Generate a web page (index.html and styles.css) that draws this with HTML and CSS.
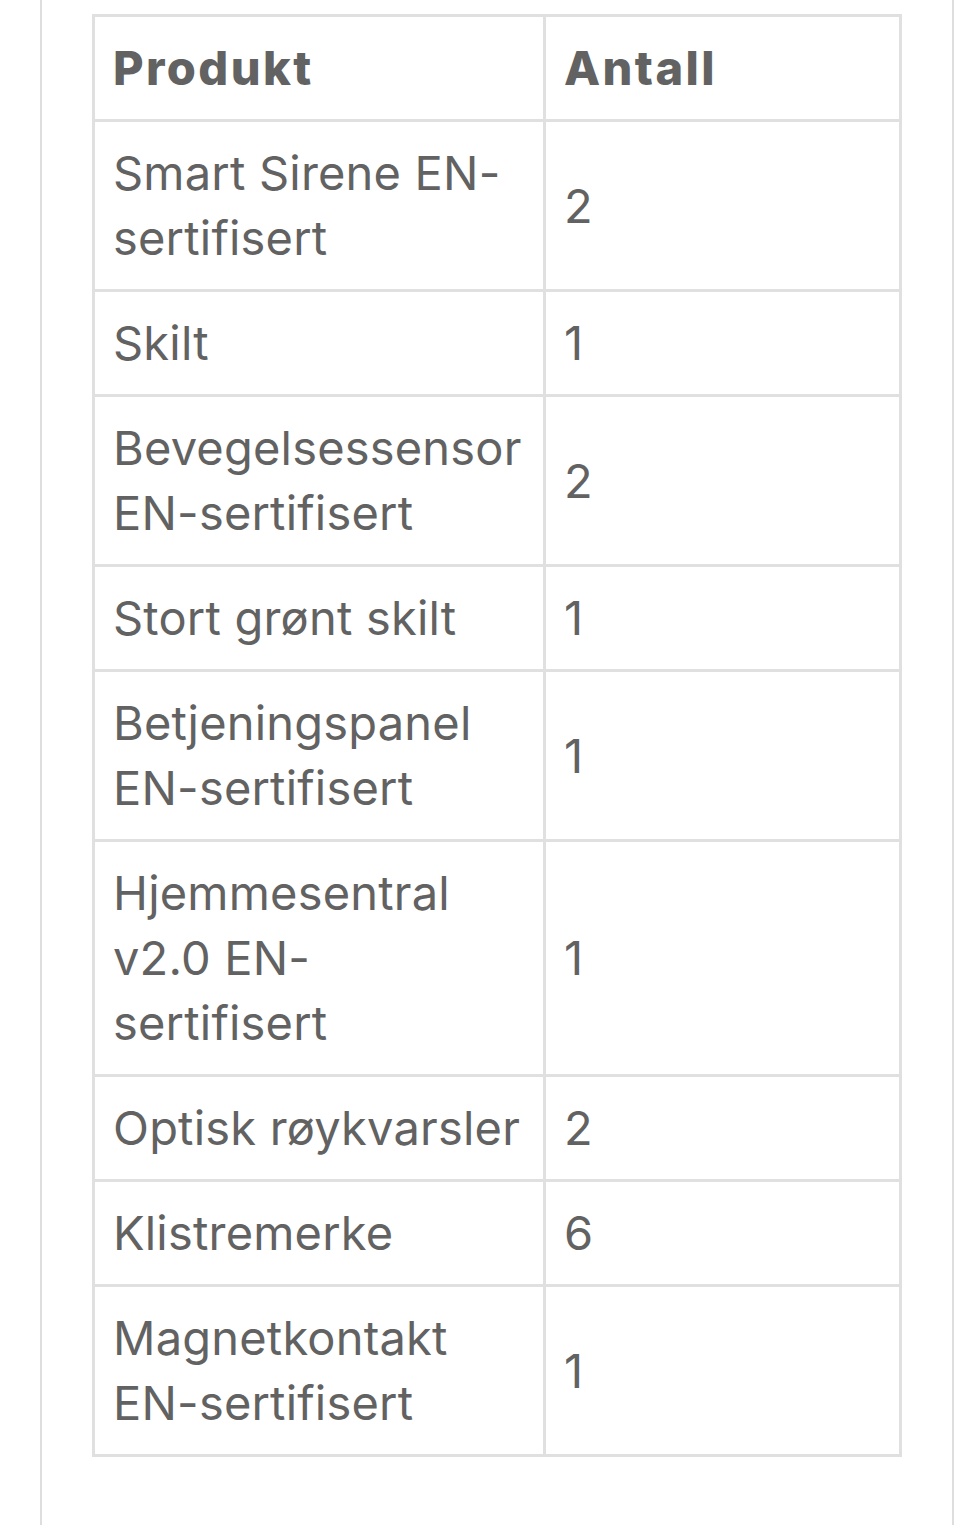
FILE: index.html
```html
<!DOCTYPE html>
<html lang="no">
<head>
<meta charset="utf-8">
<title>Produkter</title>
<link rel="stylesheet" href="styles.css">
</head>
<body>
<div class="page">
  <table class="products">
    <thead>
      <tr><th class="col-name">Produkt</th><th class="col-qty">Antall</th></tr>
    </thead>
    <tbody>
      <tr><td>Smart Sirene EN-<br>sertifisert</td><td>2</td></tr>
      <tr><td>Skilt</td><td>1</td></tr>
      <tr><td>Bevegelsessensor<br>EN-sertifisert</td><td>2</td></tr>
      <tr><td>Stort grønt skilt</td><td>1</td></tr>
      <tr><td>Betjeningspanel<br>EN-sertifisert</td><td>1</td></tr>
      <tr><td>Hjemmesentral<br>v2.0 EN-<br>sertifisert</td><td>1</td></tr>
      <tr><td>Optisk røykvarsler</td><td>2</td></tr>
      <tr><td>Klistremerke</td><td>6</td></tr>
      <tr><td>Magnetkontakt<br>EN-sertifisert</td><td>1</td></tr>
    </tbody>
  </table>
</div>
</body>
</html>
```
FILE: styles.css
```css
html, body {
  margin: 0;
  padding: 0;
  background: #fff;
}
body {
  font-family: Inter, "Noto Sans", "Liberation Sans", sans-serif;
  color: #626262;
}
.page {
  margin-left: 40px;
  width: 914px;
  min-height: 1525px;
  border-left: 2px solid #dedede;
  border-right: 2px solid #dedede;
  padding-top: 14px;
  box-sizing: border-box;
}
.products {
  margin-left: 50px;
  width: 810px;
  border-collapse: collapse;
  table-layout: fixed;
  font-size: 47px;
  line-height: 65px;
  letter-spacing: 0.2px;
}
.products th,
.products td {
  border: 3px solid #e0e0e0;
  padding: 18px 17px 19px 18px;
  text-align: left;
  vertical-align: middle;
  font-weight: 400;
  white-space: nowrap;
}
.products th {
  font-weight: 800;
  letter-spacing: 2.4px;
}
.col-name {
  box-sizing: border-box;
  width: 451px;
}
```
